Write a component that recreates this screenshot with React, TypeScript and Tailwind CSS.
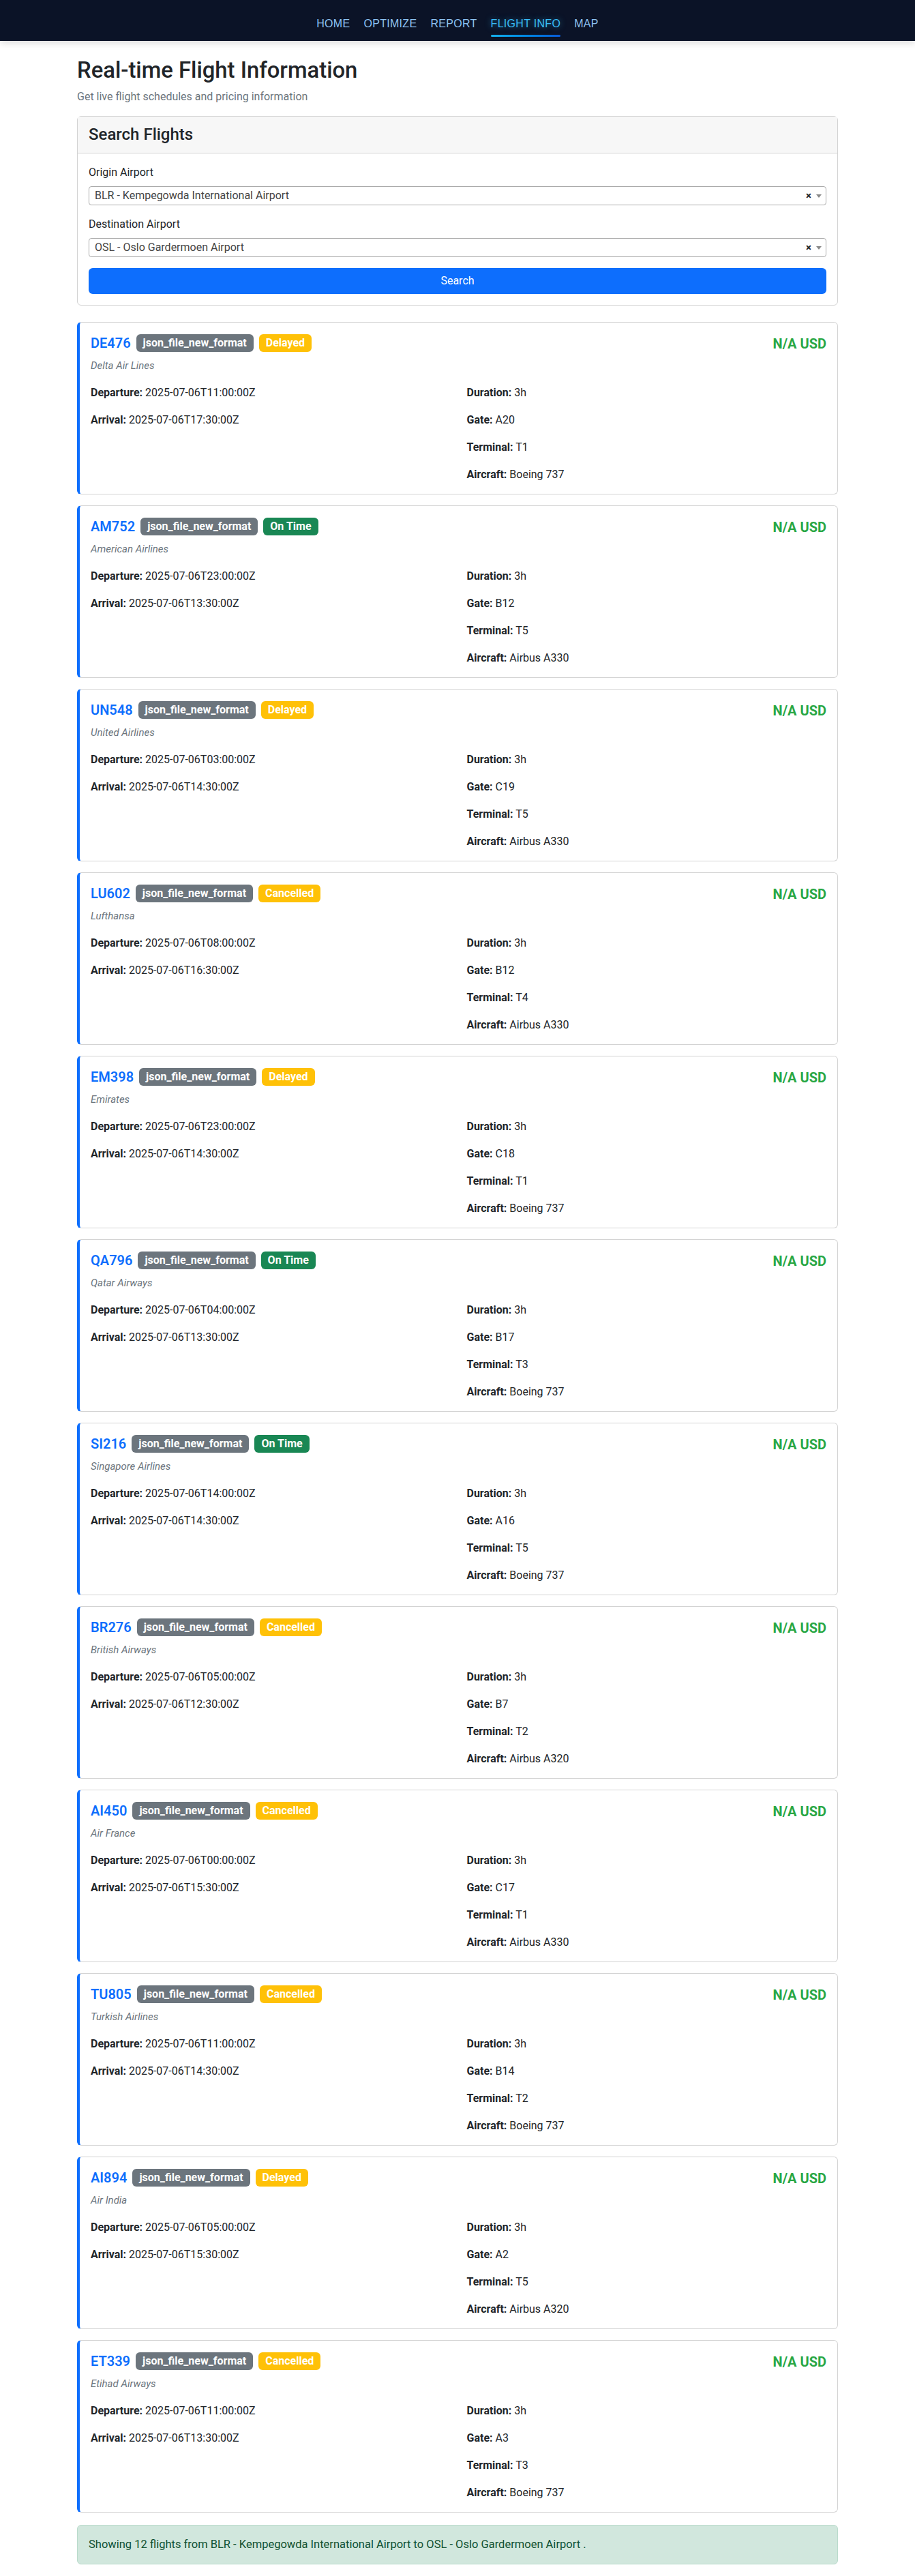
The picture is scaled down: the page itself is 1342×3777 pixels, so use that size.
import React from "react";

type Flight = {
  code: string;
  status: "Delayed" | "On Time" | "Cancelled";
  airline: string;
  departure: string;
  arrival: string;
  duration: string;
  gate: string;
  terminal: string;
  aircraft: string;
};

const FLIGHTS: Array<Flight> = [
  { code: "DE476", status: "Delayed", airline: "Delta Air Lines", departure: "2025-07-06T11:00:00Z", arrival: "2025-07-06T17:30:00Z", duration: "3h", gate: "A20", terminal: "T1", aircraft: "Boeing 737" },
  { code: "AM752", status: "On Time", airline: "American Airlines", departure: "2025-07-06T23:00:00Z", arrival: "2025-07-06T13:30:00Z", duration: "3h", gate: "B12", terminal: "T5", aircraft: "Airbus A330" },
  { code: "UN548", status: "Delayed", airline: "United Airlines", departure: "2025-07-06T03:00:00Z", arrival: "2025-07-06T14:30:00Z", duration: "3h", gate: "C19", terminal: "T5", aircraft: "Airbus A330" },
  { code: "LU602", status: "Cancelled", airline: "Lufthansa", departure: "2025-07-06T08:00:00Z", arrival: "2025-07-06T16:30:00Z", duration: "3h", gate: "B12", terminal: "T4", aircraft: "Airbus A330" },
  { code: "EM398", status: "Delayed", airline: "Emirates", departure: "2025-07-06T23:00:00Z", arrival: "2025-07-06T14:30:00Z", duration: "3h", gate: "C18", terminal: "T1", aircraft: "Boeing 737" },
  { code: "QA796", status: "On Time", airline: "Qatar Airways", departure: "2025-07-06T04:00:00Z", arrival: "2025-07-06T13:30:00Z", duration: "3h", gate: "B17", terminal: "T3", aircraft: "Boeing 737" },
  { code: "SI216", status: "On Time", airline: "Singapore Airlines", departure: "2025-07-06T14:00:00Z", arrival: "2025-07-06T14:30:00Z", duration: "3h", gate: "A16", terminal: "T5", aircraft: "Boeing 737" },
  { code: "BR276", status: "Cancelled", airline: "British Airways", departure: "2025-07-06T05:00:00Z", arrival: "2025-07-06T12:30:00Z", duration: "3h", gate: "B7", terminal: "T2", aircraft: "Airbus A320" },
  { code: "AI450", status: "Cancelled", airline: "Air France", departure: "2025-07-06T00:00:00Z", arrival: "2025-07-06T15:30:00Z", duration: "3h", gate: "C17", terminal: "T1", aircraft: "Airbus A330" },
  { code: "TU805", status: "Cancelled", airline: "Turkish Airlines", departure: "2025-07-06T11:00:00Z", arrival: "2025-07-06T14:30:00Z", duration: "3h", gate: "B14", terminal: "T2", aircraft: "Boeing 737" },
  { code: "AI894", status: "Delayed", airline: "Air India", departure: "2025-07-06T05:00:00Z", arrival: "2025-07-06T15:30:00Z", duration: "3h", gate: "A2", terminal: "T5", aircraft: "Airbus A320" },
  { code: "ET339", status: "Cancelled", airline: "Etihad Airways", departure: "2025-07-06T11:00:00Z", arrival: "2025-07-06T13:30:00Z", duration: "3h", gate: "A3", terminal: "T3", aircraft: "Boeing 737" },
];

const NAV = ["HOME", "OPTIMIZE", "REPORT", "FLIGHT INFO", "MAP"];

function Badge({ children, tone }: { children: React.ReactNode; tone: string }) {
  return (
    <span
      className={`inline-block rounded-[6px] px-[10px] py-[5px] text-[16px] font-bold leading-none text-white ${tone}`}
    >
      {children}
    </span>
  );
}

function statusTone(status: Flight["status"]) {
  if (status === "On Time") return "bg-[#198754]";
  return "bg-[#ffc107]";
}

function Select2({ value }: { value: string }) {
  return (
    <div className="flex h-[28px] items-center rounded-[4px] border border-[#aaa] bg-white pl-2 pr-[6px]">
      <span className="flex-1 text-[16px] leading-[28px] text-[#444]">{value}</span>
      <span className="mr-[7px] text-[15px] font-bold leading-none text-[#222]">×</span>
      <span className="h-0 w-0 border-x-4 border-t-[5px] border-x-transparent border-t-[#888]" />
    </div>
  );
}

function FlightCard({ flight }: { flight: Flight }) {
  return (
    <div className="mb-4 rounded-[6px] border border-l-4 border-[#d3d3d3] border-l-[#0d6efd] bg-white p-4">
      <div className="flex items-start justify-between">
        <div>
          <div className="flex h-[27px] items-center gap-2">
            <span className="text-[20px] font-semibold leading-none text-[#0d6efd]">{flight.code}</span>
            <Badge tone="bg-[#6c757d]">json_file_new_format</Badge>
            <Badge tone={statusTone(flight.status)}>{flight.status}</Badge>
          </div>
          <p className="mt-[10px] text-[15px] italic leading-[21px] text-[#6c757d]">{flight.airline}</p>
        </div>
        <span className="pt-[3px] text-[20px] font-bold leading-[24px] text-[#28a745]">N/A USD</span>
      </div>
      <div className="mt-[17px] grid grid-cols-2 gap-x-6 text-[16px] leading-[24px] text-[#212529]">
        <div className="flex flex-col gap-4">
          <p>
            <strong>Departure:</strong> {flight.departure}
          </p>
          <p>
            <strong>Arrival:</strong> {flight.arrival}
          </p>
        </div>
        <div className="flex flex-col gap-4">
          <p>
            <strong>Duration:</strong> {flight.duration}
          </p>
          <p>
            <strong>Gate:</strong> {flight.gate}
          </p>
          <p>
            <strong>Terminal:</strong> {flight.terminal}
          </p>
          <p>
            <strong>Aircraft:</strong> {flight.aircraft}
          </p>
        </div>
      </div>
    </div>
  );
}

export default function App() {
  return (
    <div className="min-h-screen bg-white font-['Roboto',sans-serif] text-[#212529]">
      <nav className="flex h-[60px] items-center justify-center gap-5 bg-[#0b1327] pt-[10px] font-['Liberation_Sans',Arial,sans-serif] shadow-[0_3px_10px_rgba(0,0,0,0.15)]">
        {NAV.map((item) => {
          const active = item === "FLIGHT INFO";
          return (
            <span
              key={item}
              className={`relative text-[16px] leading-[24px] tracking-[0.3px] ${
                active ? "text-[#38bdf8] [text-shadow:0_0_8px_rgba(56,189,248,0.55)]" : "text-[#8ec3f2]"
              }`}
            >
              {item}
              {active && (
                <span className="absolute left-0 right-0 top-full mt-[4px] h-[3px] rounded-full bg-gradient-to-r from-[#16b1ee] to-[#0b5bd8]" />
              )}
            </span>
          );
        })}
      </nav>

      <main className="mx-auto max-w-[1140px] px-3 pt-6 pb-4">
        <h2 className="mb-2 text-[32.8px] font-medium leading-[38.4px]">Real-time Flight Information</h2>
        <p className="mb-4 text-[16px] leading-[24px] text-[#6c757d]">Get live flight schedules and pricing information</p>

        <div className="mb-6 rounded-[6px] border border-[#d3d3d3]">
          <div className="border-b border-[#d3d3d3] bg-[#f7f7f7] px-4 py-3">
            <h4 className="text-[24px] font-medium leading-[28.8px]">Search Flights</h4>
          </div>
          <div className="p-4">
            <label className="mb-2 block text-[16px] leading-[24px]">Origin Airport</label>
            <Select2 value="BLR - Kempegowda International Airport" />
            <label className="mt-4 mb-2 block text-[16px] leading-[24px]">Destination Airport</label>
            <Select2 value="OSL - Oslo Gardermoen Airport" />
            <button className="mt-4 h-[38px] w-full rounded-[6px] bg-[#0d6efd] text-[16px] text-white">Search</button>
          </div>
        </div>

        {FLIGHTS.map((flight) => (
          <FlightCard key={flight.code} flight={flight} />
        ))}

        <div className="mt-[18px] rounded-[6px] border border-[#badbcc] bg-[#d1e7dd] p-4 text-[16.5px] leading-[24px] text-[#0f5132]">
          Showing 12 flights from BLR - Kempegowda International Airport to OSL - Oslo Gardermoen Airport .
        </div>
      </main>
    </div>
  );
}
